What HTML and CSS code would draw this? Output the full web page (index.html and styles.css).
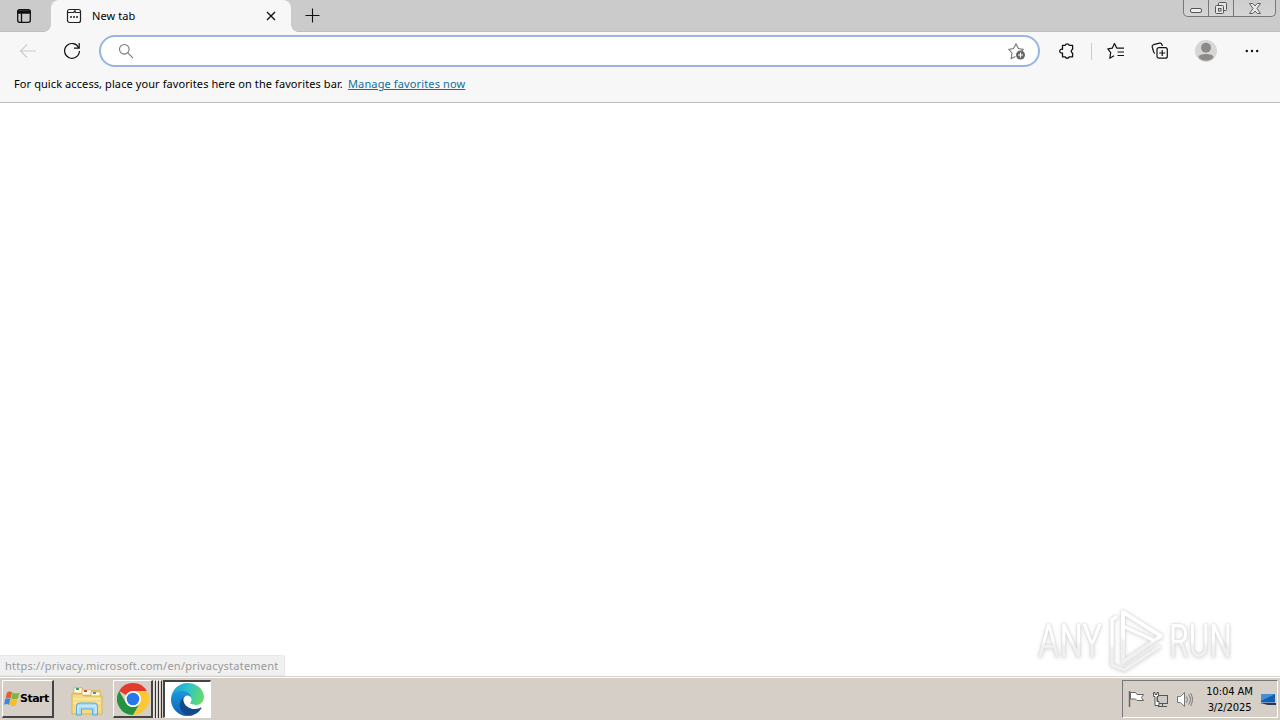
FILE: index.html
```html
<!DOCTYPE html>
<html lang="en">
<head>
    <meta charset="UTF-8">
    <meta name="viewport" content="width=device-width, initial-scale=1.0">
    <title>New tab</title>
    <link rel="stylesheet" href="styles.css">
</head>
<body>
    <header class="tab-strip">
        <div class="tab-actions">
            <svg width="16" height="16" viewBox="0 0 16 16" fill="none" stroke="#111" stroke-width="1.3">
                <rect x="1.7" y="1.7" width="12.6" height="12.6" rx="2"/>
                <path d="M2 3h12v2H2z" fill="#111"/>
                <path d="M5.5 5v9"/>
            </svg>
        </div>
        <div class="tab">
            <svg width="16" height="16" viewBox="0 0 16 16" fill="none" stroke="#222" stroke-width="1.2">
                <rect x="1.5" y="1.5" width="13" height="13" rx="2"/>
                <path d="M1.500 4.500H7.500L9 3M9 1.500v2q0 1 1 1h4.500"/>
                <path d="M4 9h2M7 9h2M10 9h2" stroke-width="1.7"/>
            </svg>
            <span class="tab-title">New tab</span>
            <svg class="tab-close" width="10" height="10" viewBox="0 0 10 10" stroke="#111" stroke-width="1.4">
                <path d="M1 1l8 8M9 1l-8 8"/>
            </svg>
        </div>
        <svg class="new-tab" width="15" height="15" viewBox="0 0 15 15" stroke="#111" stroke-width="1.1">
            <path d="M7.5 .5v14M.5 7.5h14"/>
        </svg>
        <div class="window-buttons">
            <div class="win min">
                <svg width="13" height="5" viewBox="0 0 13 5"><rect x=".5" y=".5" width="11" height="4" rx="1.5" fill="#eee" stroke="#555"/></svg>
            </div>
            <div class="win max">
                <svg width="14" height="14" viewBox="0 0 14 14" fill="#e4e4e4" stroke="#555">
                    <rect x="4.500" y="1.500" width="8" height="8" rx="1"/>
                    <rect x="1.500" y="4.500" width="8" height="8" rx="1"/>
                    <rect x="4.500" y="7.500" width="2.500" height="2.500"/>
                </svg>
            </div>
            <div class="win close">
                <svg width="12" height="11" viewBox="0 0 12 11" fill="#e8e8e8" stroke="#555" stroke-width=".9">
                    <path d="M.5 .5h3.300L6 3 8.200 .5h3.300L8 5.500l3.500 5H8.200L6 8l-2.200 2.500H.5L4 5.500z"/>
                </svg>
            </div>
        </div>
    </header>

    <nav class="toolbar">
        <svg class="back" width="18" height="16" viewBox="0 0 18 16" fill="none" stroke="#ccc" stroke-width="1.1">
            <path d="M17 8H1.500M8 1.500L1.500 8 8 14.500"/>
        </svg>
        <svg class="reload" width="18" height="18" viewBox="0 0 18 18" fill="none" stroke="#111" stroke-width="1.2">
            <path d="M15.800 6A7.400 7.400 0 1 0 16.400 9"/>
            <path d="M16.200 1v5.200H11"/>
        </svg>
        <div class="address">
            <svg width="16" height="16" viewBox="0 0 16 16" fill="none" stroke="#777" stroke-width="1.1">
                <circle cx="6.300" cy="6.300" r="4.800"/>
                <path d="M9.800 9.800l5 5"/>
            </svg>
            <svg width="18" height="18" viewBox="0 0 18 18" fill="none" stroke="#777" stroke-width="1.1">
                <path d="M7.500 14.500l-4.300 2 .8-5.400L.8 7.400l4.700-.8L8 2l2.400 4.600 4.800.8-1.500 1.600"/>
                <circle cx="12.500" cy="13" r="4.500" fill="#666" stroke="none"/>
                <path d="M12.500 10.500v5M10 13h5" stroke="#fff"/>
            </svg>
        </div>
        <div class="toolbar-icons">
            <svg class="puzzle" width="18" height="18" viewBox="0 0 18 18" fill="none" stroke="#111" stroke-width="1.3">
                <path d="M4.500 3.300h2.700a2.100 2.100 0 0 1 4 0h3.400v4a2 2 0 0 0 0 3.800v3.700h-3.400a2.100 2.100 0 0 1-4 0H4.500V11a2 2 0 1 1 0-3.700z" stroke-linejoin="round"/>
            </svg>
            <span class="divider"></span>
            <svg class="favorites" width="18" height="18" viewBox="0 0 18 18" fill="none" stroke="#111" stroke-width="1.2">
                <path d="M7 13.800l-4.200 2.400.9-5.600L.8 6.900l4.600-.8L7.500 1.500l2.200 4.600H17M10.500 10H17M10.500 13.500H17" stroke-linejoin="round"/>
            </svg>
            <svg class="collections" width="18" height="18" viewBox="0 0 18 18" fill="none" stroke="#111" stroke-width="1.2">
                <path d="M4 11.500A2 2 0 0 1 2.700 10L1.200 5A2 2 0 0 1 2.500 2.700l6-1.500a2 2 0 0 1 2.400 1.300l.5 1.500"/>
                <rect x="6" y="5.700" width="10.300" height="10.500" rx="2"/>
                <path d="M11.200 8v6M8.200 11h6"/>
            </svg>
            <svg class="avatar" width="22" height="22" viewBox="0 0 22 22">
                <circle cx="11" cy="11" r="11" fill="#d8d6d4"/>
                <circle cx="11" cy="7.800" r="5" fill="#8c8a88"/>
                <path d="M3.500 17c0-4 15-4 15 0-2.500 5-12.500 5-15 0z" fill="#8c8a88"/>
            </svg>
            <svg class="more" width="14" height="4" viewBox="0 0 14 4" fill="#111">
                <circle cx="1.800" cy="2" r="1.200"/><circle cx="7" cy="2" r="1.200"/><circle cx="12.200" cy="2" r="1.200"/>
            </svg>
        </div>
    </nav>

    <div class="favorites-bar">
        <span class="hint">For quick access, place your favorites here on the favorites bar.</span>
        <a href="#">Manage favorites now</a>
    </div>

    <main class="page">
        <div class="status">https://privacy.microsoft.com/en/privacystatement</div>
        <svg class="watermark" width="220" height="74" viewBox="0 0 220 74">
            <defs>
                <linearGradient id="fade" x1="0" y1="0" x2="0" y2="1">
                    <stop offset="50%" stop-color="#fff"/>
                    <stop offset="60%" stop-color="#f0f0f0"/>
                </linearGradient>
            </defs>
            <text x="10" y="55" textLength="64" lengthAdjust="spacingAndGlyphs">ANY</text>
            <text x="141" y="55" textLength="63" lengthAdjust="spacingAndGlyphs">RUN</text>
            <g fill="none" stroke="url(#fade)" stroke-width="4" stroke-linejoin="round" stroke-linecap="round">
                <path d="M95 59V10l38 24-38 26z"/>
                <path d="M95 24l30 14M88 15l-4 3v45l12 5 35-23" stroke-width="3.5"/>
            </g>
        </svg>
    </main>

    <footer class="taskbar">
        <div class="start">
            <svg width="16" height="16" viewBox="0 0 16 16">
                <path d="M3 1.500Q5.500 -.2 8 1.200L6.800 7.200Q4 6 1.500 7.500z" fill="#e5602c"/>
                <path d="M8.600 1.600q3.200 1.700 7 0L13.800 7.500q-3.200 1.600-6.500-.1z" fill="#79b83a"/>
                <path d="M1.200 8.200q2.600-1.500 5.300-.3L5 13.700Q2.500 12.300 0 13.700z" fill="#3c8bd8"/>
                <path d="M7 8.200q3.300 1.500 6.500 0L12 14.200q-3.200 1.600-6.500-.1z" fill="#f6bd27"/>
            </svg>
            <span>Start</span>
        </div>
        <svg class="explorer" width="32" height="32" viewBox="0 0 32 32">
            <path d="M2 5q0-3 2-3h7l2 3h15q2 0 2 3v20H2z" fill="#e5bd58"/>
            <path d="M3 3h8v5H3zM11 5h9v5h-9zM20 7h9v5h-9z" fill="#fffdf0" stroke="#d5b85e" stroke-width=".6"/>
            <path d="M5 3h3v2H5z" fill="#37a05b"/><path d="M13 5h3v2h-3z" fill="#d34a35"/><path d="M22 7h3v2h-3z" fill="#3f91d2"/>
            <path d="M1 9h10l2 2h18v18H1z" fill="#f5dc83" stroke="#d9b552"/>
            <path d="M2 14h28M2 18h28" stroke="#fcf0b8"/>
            <path d="M5.500 30v-9q0-3 3-3h15q3 0 3 3v9h-5v-6h-11v6z" fill="#a9d9f3" stroke="#5ca8d8"/>
            <path d="M7 28v-7h18v7" fill="none" stroke="#e1f5ff"/>
        </svg>
        <div class="task-group">
            <div class="task chrome">
                <svg width="32" height="32" viewBox="0 0 32 32">
                    <path d="M16 16L2.140 8A16 16 0 0 1 29.860 8z" fill="#e33b2e"/>
                    <path d="M16 8h13.860A16 16 0 0 1 16 32l6.930-12z" fill="#fcc934"/>
                    <path d="M2.140 8l6.930 12A8 8 0 0 0 22.930 20L16 32A16 16 0 0 1 2.140 8z" fill="#24923f"/>
                    <circle cx="16" cy="16" r="8" fill="#fff"/>
                    <circle cx="16" cy="16" r="6.300" fill="#2878e8"/>
                </svg>
            </div>
            <span class="stack"></span>
            <span class="stack"></span>
            <span class="stack"></span>
        </div>
        <div class="task edge">
            <svg width="33" height="33" viewBox="0 0 256 256">
                <defs>
                    <linearGradient id="wave" x1="0" y1=".3" x2="1" y2=".5">
                        <stop offset="0" stop-color="#219fd8"/>
                        <stop offset=".5" stop-color="#2fc4c8"/>
                        <stop offset="1" stop-color="#64dc68"/>
                    </linearGradient>
                    <linearGradient id="body" x1="0" y1="0" x2="0" y2="1">
                        <stop offset="0" stop-color="#1b9de2"/>
                        <stop offset="1" stop-color="#0f5fb5"/>
                    </linearGradient>
                </defs>
                <path fill="#114a8b" d="M231 190.500c-3.400 1.800-6.900 3.400-10.500 4.700a101.900 101.900 0 0 1-35.900 6.400c-47.300 0-88.500-32.500-88.500-74.300.1-11.400 6.400-21.900 16.400-27.300-42.800 1.800-53.800 46.400-53.800 72.500 0 74 68.100 81.400 82.800 81.400 7.900 0 19.800-2.300 27-4.600l1.300-.4a128.300 128.300 0 0 0 66.600-52.800 4 4 0 0 0-5.400-5.600z"/>
                <path fill="url(#body)" d="M105.700 241.400a79.200 79.200 0 0 1-22.700-21.300 80.700 80.700 0 0 1 29.500-120c3.200-1.500 8.500-4.100 15.600-4a32.400 32.400 0 0 1 25.700 13 31.900 31.900 0 0 1 6.300 18.700c0-.2 24.500-79.600-80-79.600-43.900 0-80 41.700-80 78.200-.2 19.300 4 38.500 12.100 56a128 128 0 0 0 156.400 67 75.500 75.500 0 0 1-62.800-8z"/>
                <path fill="url(#wave)" d="M152.300 148.900c-.9 1-3.400 2.500-3.400 5.600 0 2.600 1.700 5.200 4.800 7.300 14.300 10 41.400 8.600 41.500 8.600 10.700 0 21.100-2.900 30.300-8.300a61.400 61.400 0 0 0 30.400-52.900c.3-22.400-8-37.300-11.300-43.900C223.400 23.900 177.700 0 128 0A128 128 0 0 0 0 126.200c.5-36.500 36.800-66 80-66 3.500 0 23.500.3 42 10 16.300 8.600 24.900 19 30.800 29.200 6.200 10.700 7.300 24.100 7.300 29.500 0 5.300-2.700 13.300-7.800 19.900z"/>
            </svg>
        </div>
        <div class="tray">
            <svg width="17" height="18" viewBox="0 0 17 18" fill="#fff" stroke="#666">
                <path d="M1.500 1v16" stroke-width="1.5"/>
                <path d="M2.500 2.500h5l1.500 2h6.500l-2 3 2 3H9L7.500 9h-5z"/>
            </svg>
            <svg width="17" height="17" viewBox="0 0 17 17" fill="#c9c9c9" stroke="#555">
                <rect x="5.500" y="4.500" width="10" height="8"/>
                <path d="M6 15.500h9M10.500 12.500v3"/>
                <path d="M1.500 1.500v4h1.500v9h4v-4H5V5.500h1.500v-4H5v2H3v-2z" fill="#fff"/>
            </svg>
            <svg width="18" height="17" viewBox="0 0 18 17" fill="none" stroke="#777">
                <path d="M1.500 5.500h3l4-4v14l-4-4h-3z" fill="#fff"/>
                <path d="M10.500 5.500q2 3 0 6M12.500 3.500q4 5 0 10M14.500 2q4 6.500 0 13"/>
            </svg>
            <div class="clock">
                <div>10:04 AM</div>
                <div>3/2/2025</div>
            </div>
            <svg class="desktop" width="16" height="13" viewBox="0 0 16 13">
                <path d="M1 1h14v8.500H1z" fill="#155fb0"/>
                <path d="M1 1h14L1 8z" fill="#458fd5"/>
                <path d="M0 10h16v2H8z" fill="#26394e"/>
            </svg>
        </div>
    </footer>
</body>
</html>
```

FILE: styles.css
```css
* {
    box-sizing: border-box;
}

body {
    margin: 0;
    width: 1280px;
    height: 720px;
    display: flex;
    flex-direction: column;
    overflow: hidden;
    background-color: #fff;
    color: #000;
    font-family: "Noto Sans", sans-serif;
    font-size: 11px;
}

svg {
    display: block;
    flex-shrink: 0;
}

.tab-strip {
    height: 32px;
    display: flex;
    background-color: #cbcbcb;
    border-bottom: 1px solid #bebebe;
}

.tab-actions {
    width: 51px;
    padding: 8px 0 0 16px;
}

.tab {
    position: relative;
    width: 240px;
    height: 32px;
    display: flex;
    align-items: center;
    padding: 0 15px;
    background-color: #f7f7f7;
    border-radius: 8px 8px 0 0;
}

.tab::before, .tab::after {
    content: "";
    position: absolute;
    bottom: 0;
    width: 7px;
    height: 7px;
}

.tab::before {
    left: -7px;
    background: radial-gradient(circle at 0 0, transparent 6.5px, #f7f7f7 7px);
}

.tab::after {
    right: -7px;
    background: radial-gradient(circle at 100% 0, transparent 6.5px, #f7f7f7 7px);
}

.tab-title {
    margin-left: 10px;
    padding-bottom: 2px;
    letter-spacing: 0.1px;
}

.tab-close {
    margin-left: auto;
}

.new-tab {
    margin: 8px 0 0 14px;
}

.window-buttons {
    display: flex;
    width: 93px;
    height: 17px;
    margin: 0 4px 0 auto;
    border: 1px solid #777;
    border-top: none;
    border-radius: 0 0 5px 5px;
    background: linear-gradient(#cecece, #d5d5d5);
}

.win {
    display: flex;
    justify-content: center;
    align-items: center;
    width: 25px;
    border-right: 1px solid #777;
}

.win.min {
    padding-top: 4px;
}

.win.close {
    flex: 1;
    border-right: none;
}

.toolbar {
    height: 38px;
    display: flex;
    align-items: center;
    background-color: #f7f7f7;
}

.back {
    margin-left: 19px;
}

.reload {
    margin: 0 18px 0 26px;
}

.address {
    width: 941px;
    height: 32px;
    display: flex;
    align-items: center;
    justify-content: space-between;
    padding: 0 12px 0 17px;
    background-color: #fff;
    border: 2px solid #99b5df;
    border-radius: 16px;
}

.toolbar-icons {
    display: flex;
    align-items: center;
    margin-left: 18px;
}

.divider {
    width: 1px;
    height: 17px;
    margin: 0 15px;
    background-color: #ccc;
}

.collections {
    margin-left: 26px;
}

.avatar {
    margin-left: 26px;
}

.more {
    margin-left: 28px;
}

.favorites-bar {
    height: 33px;
    display: flex;
    padding: 6px 14px;
    background-color: #f7f7f7;
    border-bottom: 1px solid #bdbdbd;
    white-space: nowrap;
}

.favorites-bar .hint {
    width: 334px;
    letter-spacing: 0.09px;
}

.favorites-bar a {
    color: #136f9e;
    letter-spacing: 0.13px;
}

.page {
    flex: 1;
    display: flex;
    justify-content: space-between;
    align-items: flex-end;
    background-color: #fff;
}

.status {
    width: 285px;
    height: 21px;
    padding: 2px 5px;
    background-color: #f0f0f0;
    border: 1px solid #e8e8e8;
    border-left: none;
    border-radius: 0 3px 0 0;
    color: #999;
    letter-spacing: 0.23px;
    white-space: nowrap;
}

.watermark {
    margin-right: 32px;
    overflow: visible;
    filter: drop-shadow(0 0 1px #ccc) drop-shadow(0 1px 2px #e4e4e4);
}

.watermark text {
    font-family: Roboto, sans-serif;
    font-size: 47px;
    fill: url(#fade);
}

.taskbar {
    height: 44px;
    display: flex;
    align-items: flex-start;
    padding: 3px 2px 0;
    background-color: #d6cfc7;
    border-top: 1px solid #d5d2cb;
    box-shadow: inset 0 1px #fff;
}

.start {
    width: 52px;
    height: 38px;
    display: flex;
    align-items: center;
    padding-left: 1px;
    border: 1px solid #fff;
    border-right: 2px solid #444;
    border-bottom: 2px solid #444;
    font-family: "DejaVu Sans", sans-serif;
    font-size: 11px;
    font-weight: bold;
    letter-spacing: -0.5px;
}

.explorer {
    margin: 5px 10px 0 17px;
}

.task-group {
    display: flex;
    height: 38px;
}

.task {
    display: flex;
    align-items: center;
    justify-content: center;
    height: 38px;
}

.chrome {
    width: 40px;
    border: 1px solid #fff;
    border-right: 2px solid #444;
    border-bottom: 2px solid #444;
}

.stack {
    width: 3px;
    border-top: 1px solid #fff;
    border-left: 1px solid #e8e4df;
    border-right: 1px solid #333;
}

.edge {
    width: 48px;
    margin-left: 1px;
    background-color: #fff;
    border: 1px solid #fff;
    border-top: 2px solid #444;
    border-left: 2px solid #444;
}

.tray {
    width: 156px;
    height: 38px;
    display: flex;
    align-items: center;
    gap: 7px;
    margin-left: auto;
    padding-left: 5px;
    border: 1px solid #fff;
    border-top-color: #777;
    border-left-color: #777;
}

.clock {
    width: 47px;
    margin-left: 5px;
    padding-top: 2px;
    font-family: "DejaVu Sans", sans-serif;
    font-size: 10px;
    line-height: 16px;
    text-align: center;
    letter-spacing: -0.15px;
    white-space: nowrap;
}
```
